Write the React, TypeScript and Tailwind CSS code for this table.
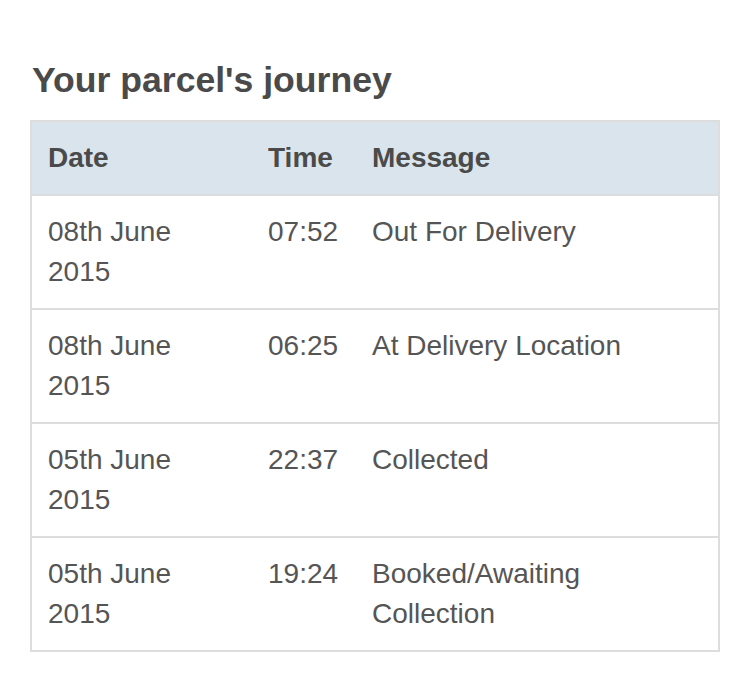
import React from "react";

const rows = [
  { date: "08th June 2015", time: "07:52", msg: "Out For Delivery" },
  { date: "08th June 2015", time: "06:25", msg: "At Delivery Location" },
  { date: "05th June 2015", time: "22:37", msg: "Collected" },
  { date: "05th June 2015", time: "19:24", msg: "Booked/Awaiting Collection" },
];

export default function App() {
  return (
    <div
      className="min-h-[688px] w-[750px] bg-white px-[30px] pt-[60px] text-[#555555]"
      style={{ fontFamily: '"Liberation Sans", Arial, sans-serif' }}
    >
      <h2 className="m-0 mb-[20px] pl-[2px] text-[35.6px] font-bold leading-[40px] text-[#4a4a4a]">
        Your parcel's journey
      </h2>
      <table className="w-[690px] table-fixed border-collapse border-2 border-[#dddddd] text-[28px] leading-[40px]">
        <colgroup>
          <col className="w-[221px]" />
          <col className="w-[104px]" />
          <col />
        </colgroup>
        <thead>
          <tr className="bg-[#dae4ec]">
            <th className="border-b-2 border-[#dddddd] px-[16px] py-[16px] text-left font-bold text-[#4a4a4a]">
              Date
            </th>
            <th className="border-b-2 border-[#dddddd] px-[16px] py-[16px] text-left font-bold text-[#4a4a4a]">
              Time
            </th>
            <th className="border-b-2 border-[#dddddd] px-[16px] py-[16px] text-left font-bold text-[#4a4a4a]">
              Message
            </th>
          </tr>
        </thead>
        <tbody>
          {rows.map((r, i) => (
            <tr key={i} className="border-t-2 border-[#dddddd]">
              <td className="px-[16px] py-[16px] align-top">{r.date}</td>
              <td className="px-[16px] py-[16px] align-top">{r.time}</td>
              <td className="px-[16px] py-[16px] align-top">{r.msg}</td>
            </tr>
          ))}
        </tbody>
      </table>
    </div>
  );
}
